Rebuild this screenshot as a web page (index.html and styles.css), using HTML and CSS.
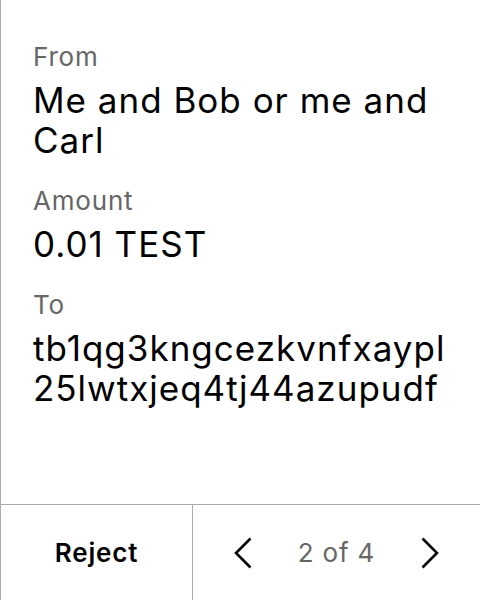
FILE: index.html
```html
<!DOCTYPE html>
<html>
<head>
<meta charset="utf-8">
<link rel="stylesheet" href="styles.css">
</head>
<body>
<div class="screen">
  <div class="content">
    <div class="field">
      <div class="label">From</div>
      <div class="value">Me and Bob or me and Carl</div>
    </div>
    <div class="field">
      <div class="label">Amount</div>
      <div class="value">0.01 TEST</div>
    </div>
    <div class="field">
      <div class="label">To</div>
      <div class="value">tb1qg3kngcezkvnfxaypl 25lwtxjeq4tj44azupudf</div>
    </div>
  </div>
  <div class="footer">
    <div class="reject">Reject</div>
    <div class="pager">
      <svg class="chev" width="18" height="32" viewBox="0 0 18 32"><path d="M16.5 1.5 L2 16 L16.5 30.5" fill="none" stroke="#000" stroke-width="2.6"/></svg>
      <span class="count">2 of 4</span>
      <svg class="chev" width="18" height="32" viewBox="0 0 18 32"><path d="M1.5 1.5 L16 16 L1.5 30.5" fill="none" stroke="#000" stroke-width="2.6"/></svg>
    </div>
  </div>
</div>
</body>
</html>
```
FILE: styles.css
```css
html, body {
  margin: 0;
  padding: 0;
  background: #fff;
}
body {
  font-family: Inter, "Liberation Sans", sans-serif;
  color: #000;
}
.screen {
  width: 479px;
  height: 600px;
  border-left: 1px solid #aaa;
  display: flex;
  flex-direction: column;
}
.content {
  flex: 1;
  padding: 41px 20px 0 32px;
  display: flex;
  flex-direction: column;
  gap: 25px;
}
.label {
  font-size: 26px;
  line-height: 32px;
  letter-spacing: 0.8px;
  color: #666;
  margin-bottom: 7px;
}
.value {
  font-size: 35px;
  line-height: 40px;
  letter-spacing: 1px;
  color: #000;
}
.footer {
  height: 95px;
  border-top: 1px solid #aaa;
  display: flex;
}
.reject {
  width: 191px;
  border-right: 1px solid #aaa;
  display: flex;
  align-items: center;
  justify-content: center;
  font-size: 26px;
  font-weight: 600;
  letter-spacing: 0.8px;
}
.pager {
  flex: 1;
  display: flex;
  align-items: center;
  justify-content: center;
  gap: 46px;
}
.count {
  font-size: 26px;
  letter-spacing: 0.8px;
  color: #666;
}
.chev {
  display: block;
}
```
